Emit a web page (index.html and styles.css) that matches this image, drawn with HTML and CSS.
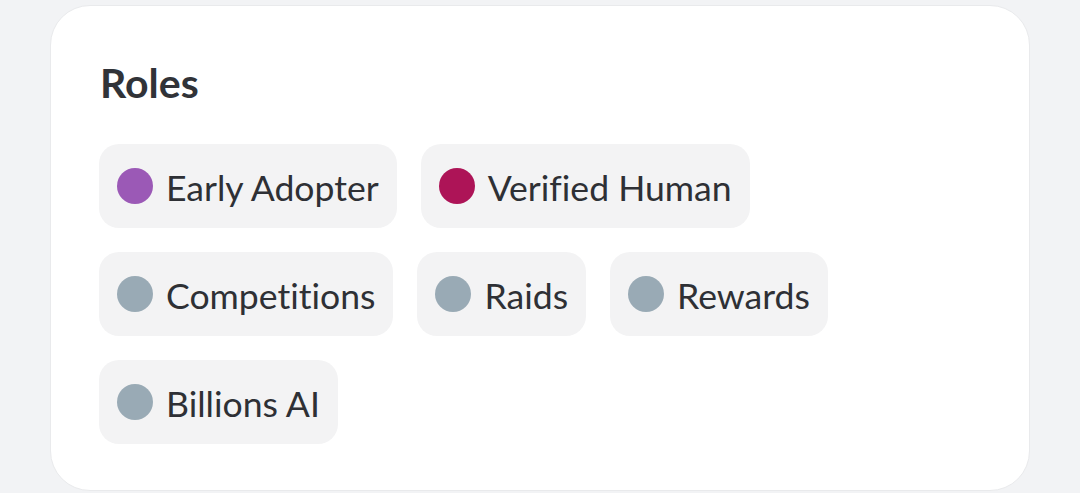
FILE: index.html
```html
<!DOCTYPE html>
<html lang="en">
<head>
<meta charset="utf-8">
<title>Roles</title>
<link rel="stylesheet" href="styles.css">
</head>
<body>
  <section class="card">
    <h2 class="title">Roles</h2>
    <ul class="roles">
      <li class="role"><span class="dot dot-purple"></span><span class="name">Early Adopter</span></li>
      <li class="role"><span class="dot dot-crimson"></span><span class="name">Verified Human</span></li>
      <li class="role"><span class="dot"></span><span class="name">Competitions</span></li>
      <li class="role"><span class="dot"></span><span class="name">Raids</span></li>
      <li class="role"><span class="dot"></span><span class="name">Rewards</span></li>
      <li class="role"><span class="dot"></span><span class="name">Billions AI</span></li>
    </ul>
  </section>
</body>
</html>
```

FILE: styles.css
```css
html, body {
  margin: 0;
  padding: 0;
}
body {
  background: #f2f3f5;
  font-family: "Lato", "Noto Sans", sans-serif;
  font-variant-ligatures: none;
  color: #2e3035;
  height: 493px;
  overflow: hidden;
}
.card {
  margin: 5px 50px 0 50px;
  background: #ffffff;
  border: 1px solid #e9eaec;
  border-radius: 40px;
  padding: 53px 49px 46px 48px;
}
.title {
  margin: 0 0 0 1px;
  font-size: 41px;
  line-height: 48px;
  font-weight: 700;
  color: #313338;
}
.roles {
  list-style: none;
  margin: 37px 0 0 0;
  padding: 0;
  display: flex;
  flex-wrap: wrap;
  gap: 24px 24px;
}
.role {
  display: flex;
  align-items: center;
  height: 84px;
  box-sizing: border-box;
  padding: 0 18px;
  background: #f3f3f4;
  border-radius: 20px;
  gap: 13px;
}
.dot {
  width: 36px;
  height: 36px;
  border-radius: 50%;
  background: #99aab5;
  flex: none;
}
.dot-purple { background: #9b59b6; }
.dot-crimson { background: #ad1457; }
.name {
  font-size: 35.6px;
  line-height: 42px;
  padding-top: 3px;
  color: #2e3035;
}
```
